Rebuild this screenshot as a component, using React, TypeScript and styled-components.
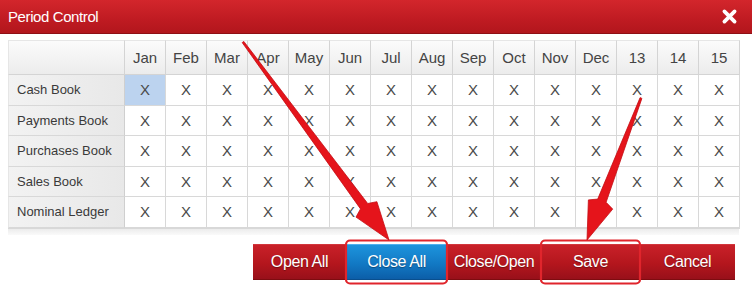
import React from "react";
import styled, { createGlobalStyle } from "styled-components";

const Global = createGlobalStyle`
  html, body { margin: 0; padding: 0; background: #ffffff; }
  body { font-family: "Liberation Sans", Arial, sans-serif; }
`;

const Dialog = styled.div`
  position: relative;
  width: 752px;
  height: 293px;
  overflow: hidden;
  background: #ffffff;
  display: flex;
  flex-direction: column;
`;

const TitleBar = styled.div`
  height: 34px;
  box-sizing: border-box;
  background: linear-gradient(#d3262c, #bf1b22 60%, #b2161c);
  border-bottom: 1px solid #8e1015;
  display: flex;
  align-items: center;
  justify-content: space-between;
  padding: 0 14px 0 8px;
`;

const Title = styled.span`
  color: #ffffff;
  font-size: 15px;
  letter-spacing: -0.4px;
`;

const CloseIcon = styled.svg`
  width: 17px;
  height: 17px;
  display: block;
`;

const Body = styled.div`
  padding: 6px 0 0 8px;
  display: flex;
  flex-direction: column;
`;

const Grid = styled.div`
  display: grid;
  grid-template-columns: 117px repeat(15, 41px);
  grid-auto-rows: 30.5px;
  grid-template-rows: 35px;
  width: max-content;
  border-bottom: 1px solid #d8d8d8;
`;

const HeadCell = styled.div<{ $blank?: boolean }>`
  box-sizing: border-box;
  display: flex;
  align-items: center;
  justify-content: center;
  background: linear-gradient(#fbfbfb, #ececec);
  border-right: 1px solid #d4d4d4;
  border-bottom: 1px solid #d4d4d4;
  border-top: 1px solid #e6e6e6;
  border-left: ${(p) => (p.$blank ? "1px solid #e6e6e6" : "none")};
  color: #444444;
  font-size: 15px;
`;

const LabelCell = styled.div`
  box-sizing: border-box;
  display: flex;
  align-items: center;
  padding-left: 8px;
  background: linear-gradient(90deg, #f2f2f2, #e8e8e8);
  border-bottom: 1px solid #d8d8d8;
  border-right: 1px solid #cfcfcf;
  border-left: 1px solid #e6e6e6;
  color: #3a3a3a;
  font-size: 13px;
`;

const DataCell = styled.div<{ $selected?: boolean }>`
  box-sizing: border-box;
  display: flex;
  align-items: center;
  justify-content: center;
  background: ${(p) => (p.$selected ? "#bcd3ef" : "#ffffff")};
  border-right: 1px solid #d8d8d8;
  border-bottom: 1px solid #d8d8d8;
  color: #4a4a4a;
  font-size: 15px;
`;

const Shade = styled.div`
  width: 731px;
  height: 6px;
  background: linear-gradient(#ececec, #fafafa);
`;

const ButtonBar = styled.div`
  display: flex;
  justify-content: flex-end;
  padding: 9px 17px 0 0;
`;

const Button = styled.button<{ $primary?: boolean; $w: number }>`
  width: ${(p) => p.$w}px;
  height: 36px;
  margin: 0;
  padding: 0;
  border: none;
  border-top: 1px solid ${(p) => (p.$primary ? "#4fb0ee" : "#d2363c")};
  border-bottom: 1px solid ${(p) => (p.$primary ? "#0a4f8e" : "#7e0c10")};
  background: ${(p) =>
    p.$primary
      ? "linear-gradient(#1d94dd, #1279c4 55%, #0c5ea8)"
      : "linear-gradient(#c92129, #b4161d 55%, #98101a)"};
  color: #ffffff;
  font-family: "Liberation Sans", Arial, sans-serif;
  font-size: 16px;
  letter-spacing: -0.4px;
  text-shadow: 0 1px 1px rgba(0, 0, 0, 0.35);
  cursor: pointer;
`;

const Overlay = styled.svg`
  position: absolute;
  left: 0;
  top: 0;
  width: 752px;
  height: 293px;
  pointer-events: none;
`;

const months = ["Jan", "Feb", "Mar", "Apr", "May", "Jun", "Jul", "Aug", "Sep", "Oct", "Nov", "Dec", "13", "14", "15"];
const books = ["Cash Book", "Payments Book", "Purchases Book", "Sales Book", "Nominal Ledger"];
const buttons = [
  { label: "Open All", w: 93 },
  { label: "Close All", w: 101, primary: true },
  { label: "Close/Open", w: 94 },
  { label: "Save", w: 99 },
  { label: "Cancel", w: 95 },
];

function arrowPoints(tx: number, ty: number, hx: number, hy: number) {
  const dx = hx - tx;
  const dy = hy - ty;
  const len = Math.hypot(dx, dy);
  const ux = dx / len;
  const uy = dy / len;
  const nx = -uy;
  const ny = ux;
  const headLen = 42;
  const bx = hx - ux * headLen;
  const by = hy - uy * headLen;
  const pt = (x: number, y: number, w: number) => [
    [x + nx * w, y + ny * w],
    [x - nx * w, y - ny * w],
  ];
  const [t1, t2] = pt(tx, ty, 1);
  const [s1, s2] = pt(bx, by, 4.5);
  const [h1, h2] = pt(bx + ux * 4, by + uy * 4, 13);
  const pts = [t1, s1, h1, [hx, hy], h2, s2, t2];
  return pts.map((p) => p.map((v) => v.toFixed(1)).join(",")).join(" ");
}

export default function App() {
  return (
    <>
      <Global />
      <Dialog>
        <TitleBar>
          <Title>Period Control</Title>
          <CloseIcon viewBox="0 0 20 20">
            <path d="M4 4 L16 16 M16 4 L4 16" stroke="#ffffff" strokeWidth="4.4" strokeLinecap="round" />
          </CloseIcon>
        </TitleBar>
        <Body>
          <Grid>
            <HeadCell $blank />
            {months.map((m) => (
              <HeadCell key={m}>{m}</HeadCell>
            ))}
            {books.map((b, r) => (
              <React.Fragment key={b}>
                <LabelCell>{b}</LabelCell>
                {months.map((m, c) => (
                  <DataCell key={m} $selected={r === 0 && c === 0}>
                    X
                  </DataCell>
                ))}
              </React.Fragment>
            ))}
          </Grid>
          <Shade />
        </Body>
        <ButtonBar>
          {buttons.map((b) => (
            <Button key={b.label} $w={b.w} $primary={b.primary}>
              {b.label}
            </Button>
          ))}
        </ButtonBar>
        <Overlay viewBox="0 0 752 293">
          <rect x="346" y="240.5" width="101" height="43" rx="4" fill="none" stroke="#e0252c" strokeWidth="2.2" />
          <rect x="541" y="240.5" width="99" height="43" rx="4" fill="none" stroke="#e0252c" strokeWidth="2.2" />
          <polygon points={arrowPoints(243, 42, 389, 240)} fill="#e5141b" stroke="#c40d13" strokeWidth="0.8" strokeLinejoin="round" />
          <polygon points={arrowPoints(641, 98, 587, 240)} fill="#e5141b" stroke="#c40d13" strokeWidth="0.8" strokeLinejoin="round" />
        </Overlay>
      </Dialog>
    </>
  );
}
